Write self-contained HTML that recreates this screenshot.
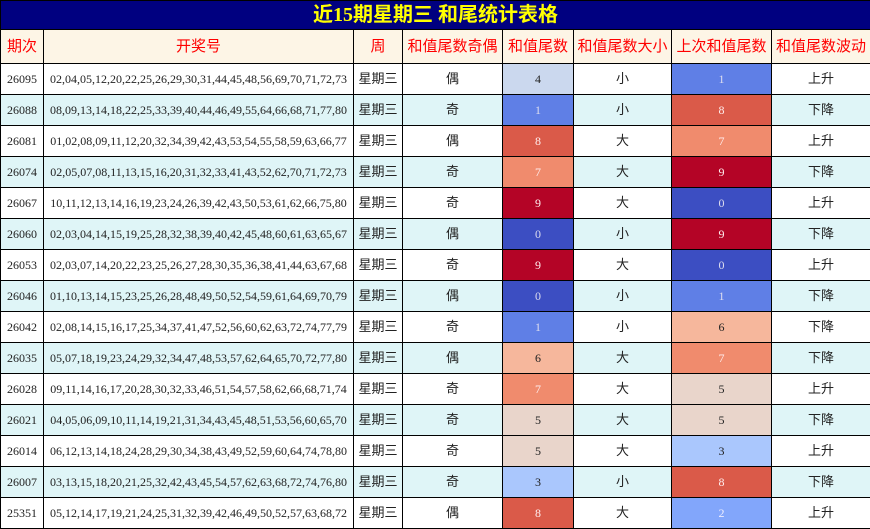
<!DOCTYPE html>
<html><head><meta charset="utf-8"><style>
body{margin:0;width:870px;height:529px;overflow:hidden;background:#fff;font-family:"Liberation Serif","Noto Serif CJK SC",serif;}
table{border-collapse:collapse;table-layout:fixed;width:870px;}
td{border:1px solid #000;text-align:center;padding:0;height:30px;line-height:16px;font-size:12px;color:#222;white-space:nowrap;overflow:hidden;}
td.c{font-family:"Liberation Sans","Noto Sans CJK SC",sans-serif;font-size:13px;}
tr:nth-child(odd) td{background:#fff;}
tr:nth-child(even) td{background:#dff5f7;}
table tr.t td{background:#000080;color:#ffff00;font-weight:bold;font-size:20px;height:28px;line-height:20px;font-family:"Liberation Serif","Noto Sans CJK SC",sans-serif;}
table tr.h td{background:#fdf5e6;color:#f00;font-family:"Liberation Sans","Noto Sans CJK SC",sans-serif;font-size:15px;height:33px;}
td.v0{background:#3c4ec2!important;color:#dde}
td.v1{background:#5f7fe6!important;color:#dde}
td.v2{background:#82a6fb!important;color:#eef}
td.v3{background:#aac7fd!important;color:#222}
td.v4{background:#cbd8ee!important;color:#222}
td.v5{background:#e9d5cb!important;color:#222}
td.v6{background:#f6b79c!important;color:#222}
td.v7{background:#f08b6d!important;color:#fee}
td.v8{background:#da5a49!important;color:#fee}
td.v9{background:#b40426!important;color:#fee}
</style></head><body>
<table>
<colgroup><col style="width:43px"><col style="width:310px"><col style="width:49px"><col style="width:100px"><col style="width:71px"><col style="width:98px"><col style="width:100px"><col style="width:99px"></colgroup>
<tr class="t"><td colspan="8">近15期星期三 和尾统计表格</td></tr>
<tr class="h"><td>期次</td><td>开奖号</td><td>周</td><td>和值尾数奇偶</td><td>和值尾数</td><td>和值尾数大小</td><td>上次和值尾数</td><td>和值尾数波动</td></tr>
<tr><td>26095</td><td>02,04,05,12,20,22,25,26,29,30,31,44,45,48,56,69,70,71,72,73</td><td class="c">星期三</td><td class="c">偶</td><td class="v4">4</td><td class="c">小</td><td class="v1">1</td><td class="c">上升</td></tr>
<tr><td>26088</td><td>08,09,13,14,18,22,25,33,39,40,44,46,49,55,64,66,68,71,77,80</td><td class="c">星期三</td><td class="c">奇</td><td class="v1">1</td><td class="c">小</td><td class="v8">8</td><td class="c">下降</td></tr>
<tr><td>26081</td><td>01,02,08,09,11,12,20,32,34,39,42,43,53,54,55,58,59,63,66,77</td><td class="c">星期三</td><td class="c">偶</td><td class="v8">8</td><td class="c">大</td><td class="v7">7</td><td class="c">上升</td></tr>
<tr><td>26074</td><td>02,05,07,08,11,13,15,16,20,31,32,33,41,43,52,62,70,71,72,73</td><td class="c">星期三</td><td class="c">奇</td><td class="v7">7</td><td class="c">大</td><td class="v9">9</td><td class="c">下降</td></tr>
<tr><td>26067</td><td>10,11,12,13,14,16,19,23,24,26,39,42,43,50,53,61,62,66,75,80</td><td class="c">星期三</td><td class="c">奇</td><td class="v9">9</td><td class="c">大</td><td class="v0">0</td><td class="c">上升</td></tr>
<tr><td>26060</td><td>02,03,04,14,15,19,25,28,32,38,39,40,42,45,48,60,61,63,65,67</td><td class="c">星期三</td><td class="c">偶</td><td class="v0">0</td><td class="c">小</td><td class="v9">9</td><td class="c">下降</td></tr>
<tr><td>26053</td><td>02,03,07,14,20,22,23,25,26,27,28,30,35,36,38,41,44,63,67,68</td><td class="c">星期三</td><td class="c">奇</td><td class="v9">9</td><td class="c">大</td><td class="v0">0</td><td class="c">上升</td></tr>
<tr><td>26046</td><td>01,10,13,14,15,23,25,26,28,48,49,50,52,54,59,61,64,69,70,79</td><td class="c">星期三</td><td class="c">偶</td><td class="v0">0</td><td class="c">小</td><td class="v1">1</td><td class="c">下降</td></tr>
<tr><td>26042</td><td>02,08,14,15,16,17,25,34,37,41,47,52,56,60,62,63,72,74,77,79</td><td class="c">星期三</td><td class="c">奇</td><td class="v1">1</td><td class="c">小</td><td class="v6">6</td><td class="c">下降</td></tr>
<tr><td>26035</td><td>05,07,18,19,23,24,29,32,34,47,48,53,57,62,64,65,70,72,77,80</td><td class="c">星期三</td><td class="c">偶</td><td class="v6">6</td><td class="c">大</td><td class="v7">7</td><td class="c">下降</td></tr>
<tr><td>26028</td><td>09,11,14,16,17,20,28,30,32,33,46,51,54,57,58,62,66,68,71,74</td><td class="c">星期三</td><td class="c">奇</td><td class="v7">7</td><td class="c">大</td><td class="v5">5</td><td class="c">上升</td></tr>
<tr><td>26021</td><td>04,05,06,09,10,11,14,19,21,31,34,43,45,48,51,53,56,60,65,70</td><td class="c">星期三</td><td class="c">奇</td><td class="v5">5</td><td class="c">大</td><td class="v5">5</td><td class="c">下降</td></tr>
<tr><td>26014</td><td>06,12,13,14,18,24,28,29,30,34,38,43,49,52,59,60,64,74,78,80</td><td class="c">星期三</td><td class="c">奇</td><td class="v5">5</td><td class="c">大</td><td class="v3">3</td><td class="c">上升</td></tr>
<tr><td>26007</td><td>03,13,15,18,20,21,25,32,42,43,45,54,57,62,63,68,72,74,76,80</td><td class="c">星期三</td><td class="c">奇</td><td class="v3">3</td><td class="c">小</td><td class="v8">8</td><td class="c">下降</td></tr>
<tr><td>25351</td><td>05,12,14,17,19,21,24,25,31,32,39,42,46,49,50,52,57,63,68,72</td><td class="c">星期三</td><td class="c">偶</td><td class="v8">8</td><td class="c">大</td><td class="v2">2</td><td class="c">上升</td></tr>
</table>
</body></html>
